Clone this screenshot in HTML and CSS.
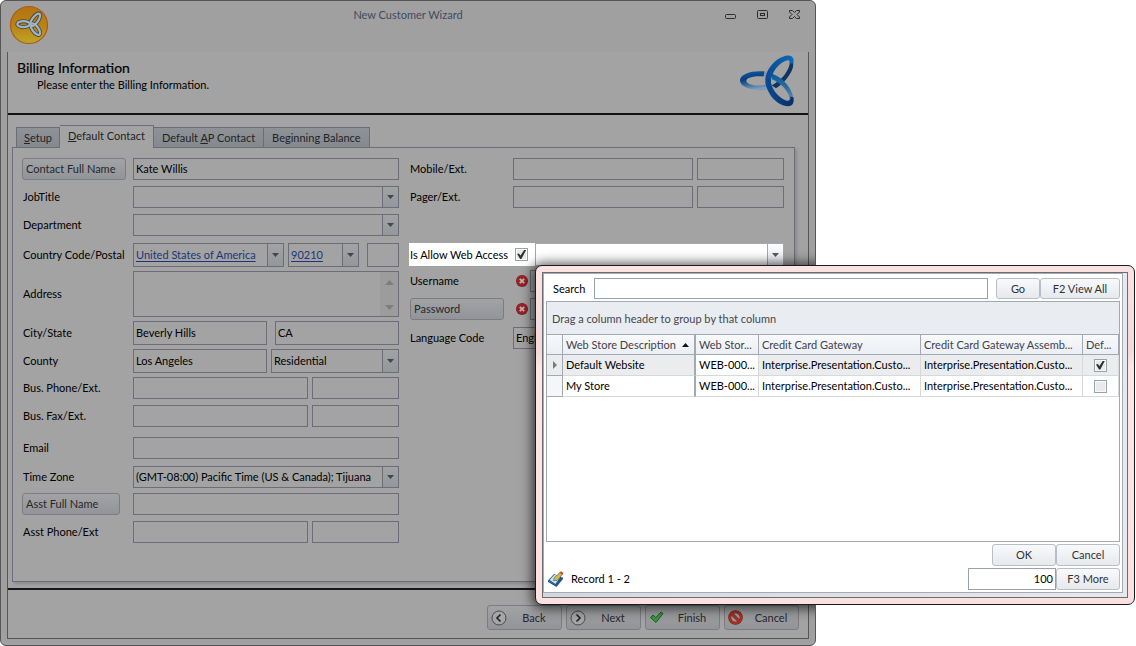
FILE: index.html
```html
<!DOCTYPE html>
<html lang="en">
<head>
<meta charset="utf-8">
<title>New Customer Wizard</title>
<link rel="stylesheet" href="styles.css">
</head>
<body>
<svg class="defs" width="0" height="0" aria-hidden="true">
  <defs>
    <linearGradient id="loopLeft" x1="0" y1="0" x2="0.25" y2="1"><stop offset="0" stop-color="#0c62a8"/><stop offset=".45" stop-color="#0a3a7c"/><stop offset=".75" stop-color="#3f6f9f"/><stop offset="1" stop-color="#7f9db8"/></linearGradient>
    <linearGradient id="loopTop" x1="1" y1="0" x2="0" y2="0"><stop offset="0" stop-color="#0d6cb4"/><stop offset="1" stop-color="#0a4a93"/></linearGradient>
    <linearGradient id="loopLow" x1="0" y1="0" x2="1" y2="0"><stop offset="0" stop-color="#0a4a93"/><stop offset="1" stop-color="#0b2f66"/></linearGradient>
    <linearGradient id="loopIn" x1="0" y1="0" x2="0" y2="1"><stop offset="0" stop-color="#0b5c9c"/><stop offset=".4" stop-color="#2b6a9c"/><stop offset="1" stop-color="#7c9cba"/></linearGradient>
    <linearGradient id="gold" x1="0" y1="0" x2="0" y2="1"><stop offset="0" stop-color="#b3740f"/><stop offset=".5" stop-color="#b98212"/><stop offset="1" stop-color="#bfa528"/></linearGradient>
    <symbol id="err" viewBox="0 0 12 12"><circle cx="6" cy="6" r="6" fill="#861a1e"/><circle cx="6" cy="5.700" r="5.200" fill="#992428"/><path d="M3.8 3.8l4.4 4.4M8.2 3.8L3.8 8.2" stroke="#c4b4b4" stroke-width="1.8"/></symbol>
    <symbol id="down" viewBox="0 0 7 4"><path d="M0 0h7L3.500 4z" fill="currentColor"/></symbol>
  </defs>
</svg>

<div class="desktop">
<main class="window">
  <header class="titlebar">
    <svg class="app-icon" viewBox="0 0 40 40" aria-hidden="true">
      <circle cx="20" cy="20" r="18.500" fill="url(#gold)" stroke="#ad5a1c" stroke-width="1.200"/>
      <g fill="none" stroke="#4c4a3c" stroke-width="4"><ellipse cx="14.500" cy="19.200" rx="6.200" ry="3"/><ellipse cx="26.200" cy="14.800" rx="7.400" ry="3" transform="rotate(-54 26.200 14.800)"/><ellipse cx="26.400" cy="24.200" rx="6.800" ry="3" transform="rotate(53 26.400 24.200)"/></g>
      <g fill="none" stroke="#9db4c8" stroke-width="2.200"><ellipse cx="14.500" cy="19.200" rx="6.200" ry="3"/><ellipse cx="26.200" cy="14.800" rx="7.400" ry="3" transform="rotate(-54 26.200 14.800)"/><ellipse cx="26.400" cy="24.200" rx="6.800" ry="3" transform="rotate(53 26.400 24.200)"/></g>
    </svg>
    <h1 class="window-title">New Customer Wizard</h1>
    <div class="window-controls">
      <button type="button" aria-label="Minimize"><svg width="11" height="10" viewBox="0 0 11 10"><rect x=".5" y="4.500" width="10" height="4" rx="1" fill="none" stroke="#2c2c30"/></svg></button>
      <button type="button" aria-label="Maximize"><svg width="11" height="10" viewBox="0 0 11 10"><rect x=".5" y=".5" width="10" height="8" rx="1" fill="none" stroke="#2c2c30"/><rect x="3.500" y="3.500" width="4" height="2" fill="none" stroke="#2c2c30"/></svg></button>
      <button type="button" aria-label="Close"><svg width="11" height="10" viewBox="0 0 11 10"><path d="M.5.500h3l2 2 2-2h3v1.500L8 4.500l2.500 2.500v1.500h-3l-2-2-2 2h-3V7L3 4.500.5 2z" fill="none" stroke="#2c2c30"/></svg></button>
    </div>
  </header>

  <div class="wizard">
    <section class="intro">
      <div>
        <h2>Billing Information</h2>
        <p>Please enter the Billing Information.</p>
      </div>
      <svg class="brand" viewBox="598 162 168 158" aria-hidden="true">
        <path fill="url(#loopLeft)" fill-rule="evenodd" d="M677 214C640 210 601 220 601 241c0 20 40 34 84 28l8-6-8-12C660 261 620 256 620 242c0-12 30-16 56-13z"/>
        <path fill="#0c3563" d="M752 180c10 2 10 14 7 24-8 24-28 46-50 60l-13-9c28-13 45-36 52-56 3-9 4-15 1-19z"/>
        <path fill="url(#loopIn)" d="M697 221c34 12 60 43 65 76 1 10-3 18-12 20l-9-14c11-1 9-13 4-23-10-20-29-35-48-43z"/>
        <path fill="url(#loopTop)" d="M761 190c4-17-4-25-17-24-32 3-66 40-67 73 0 10 2 17 5 24l13-8c-6-26 14-60 40-72 12-5 18-3 14 7z"/>
        <path fill="url(#loopLow)" d="M677 237c0 40 34 80 68 81 15 0 19-12 16-27l-9-2c2 14-6 15-15 11-24-10-42-36-46-63z"/>
        <path d="M676 212c-3 12-3 20 0 32" fill="none" stroke="#a3a3a3" stroke-width="3"/>
      </svg>
    </section>

    <section class="content">
      <nav class="tabs" role="tablist">
        <button type="button" role="tab" class="tab"><u>S</u>etup</button>
        <button type="button" role="tab" class="tab active" aria-selected="true"><u>D</u>efault Contact</button>
        <button type="button" role="tab" class="tab">Default <u>A</u>P Contact</button>
        <button type="button" role="tab" class="tab">Be<u>g</u>inning Balance</button>
      </nav>

      <form class="panel">
        <div class="column">
          <div class="row"><button type="button" class="btn wide">Contact Full Name</button><input class="field" aria-label="Contact Full Name" value="Kate Willis"></div>
          <div class="row"><label for="job">JobTitle</label><span class="combo"><input id="job"><button type="button" aria-label="Open"><svg class="caret"><use href="#down"/></svg></button></span></div>
          <div class="row"><label for="dept">Department</label><span class="combo"><input id="dept"><button type="button" aria-label="Open"><svg class="caret"><use href="#down"/></svg></button></span></div>
          <div class="row tall space-7"><span class="label">Country Code/Postal</span>
            <div class="postal"><span class="combo"><a href="#country">United States of America</a><button type="button" aria-label="Open"><svg class="caret"><use href="#down"/></svg></button></span><span class="combo"><a href="#postal">90210</a><button type="button" aria-label="Open"><svg class="caret"><use href="#down"/></svg></button></span><input class="field" aria-label="Plus 4"></div></div>
          <div class="row address space-4"><label for="addr">Address</label><div class="area"><textarea id="addr"></textarea><span class="scroll"><svg class="scroll-arrow up"><use href="#down"/></svg><svg class="scroll-arrow"><use href="#down"/></svg></span></div></div>
          <div class="row tall space-4"><label for="city">City/State</label><div class="city"><input class="field" id="city" value="Beverly Hills"><input class="field" aria-label="State" value="CA"></div></div>
          <div class="row tall space-4"><label for="county">County</label><div class="county"><input class="field" id="county" value="Los Angeles"><span class="combo"><select aria-label="Address type"><option>Residential</option></select><span class="arrow"><svg class="caret"><use href="#down"/></svg></span></span></div></div>
          <div class="row space-4"><label for="phone">Bus. Phone/Ext.</label><div class="phone"><input class="field" id="phone"><input class="field" aria-label="Phone extension"></div></div>
          <div class="row"><label for="fax">Bus. Fax/Ext.</label><div class="phone"><input class="field" id="fax"><input class="field" aria-label="Fax extension"></div></div>
          <div class="row space-10"><label for="email">Email</label><input class="field" id="email"></div>
          <div class="row space-7"><label for="tz">Time Zone</label><span class="combo"><select id="tz"><option>(GMT-08:00) Pacific Time (US &amp; Canada); Tijuana</option></select><span class="arrow"><svg class="caret"><use href="#down"/></svg></span></span></div>
          <div class="row space-5"><button type="button" class="btn asst">Asst Full Name</button><input class="field" aria-label="Asst Full Name"></div>
          <div class="row"><label for="asst">Asst Phone/Ext</label><div class="phone"><input class="field" id="asst"><input class="field" aria-label="Asst extension"></div></div>
        </div>

        <div class="column side">
          <div class="row"><label for="mobile">Mobile/Ext.</label><div class="mobile"><input class="field" id="mobile"><input class="field" aria-label="Mobile extension"></div></div>
          <div class="row"><label for="pager">Pager/Ext.</label><div class="mobile"><input class="field" id="pager"><input class="field" aria-label="Pager extension"></div></div>
          <div class="access"><span class="access-check"><label for="allow">Is Allow Web Access</label><input type="checkbox" id="allow" class="check" checked></span><span class="combo lit"><input aria-label="Web store"><button type="button" aria-label="Open"><svg class="caret"><use href="#down"/></svg></button></span></div>
          <div class="row space-4"><label for="user">Username</label><div class="required"><svg class="error"><use href="#err"/></svg><input class="field" id="user"></div></div>
          <div class="row"><button type="button" class="btn pass">Password</button><div class="required"><svg class="error"><use href="#err"/></svg><input class="field" type="password" aria-label="Password"></div></div>
          <div class="row space-7"><label for="lang">Language Code</label><span class="combo"><select id="lang"><option>English</option></select></span></div>
        </div>
      </form>
    </section>

    <footer class="actions">
      <button type="button" class="btn nav"><svg class="nav-icon" viewBox="0 0 16 16"><circle cx="8" cy="8" r="7" fill="#a6a6a6" stroke="#4c4c50"/><path d="M9.500 4.500L6 8l3.500 3.500" fill="none" stroke="#222" stroke-width="1.600"/></svg><span>Back</span></button>
      <button type="button" class="btn nav"><svg class="nav-icon" viewBox="0 0 16 16"><circle cx="8" cy="8" r="7" fill="#a6a6a6" stroke="#4c4c50"/><path d="M6.500 4.500L10 8l-3.500 3.500" fill="none" stroke="#222" stroke-width="1.600"/></svg><span>Next</span></button>
      <button type="button" class="btn nav"><svg class="nav-icon" viewBox="0 0 16 16"><path d="M1.500 7.500l2.700-2.500 2.600 2.700L12 2l2 1.500-7 9z" fill="#3c9a35" stroke="#1d5a22"/></svg><span>Finish</span></button>
      <button type="button" class="btn nav"><svg class="nav-icon" viewBox="0 0 16 16"><circle cx="7.500" cy="7.500" r="5.800" fill="none" stroke="#7e2017" stroke-width="3"/><path d="M3.500 3.500l8 8" stroke="#7e2017" stroke-width="3"/><circle cx="7.500" cy="7.500" r="5.800" fill="none" stroke="#a93425" stroke-width="1.800"/><path d="M3.500 3.500l8 8" stroke="#a93425" stroke-width="1.800"/></svg><span>Cancel</span></button>
    </footer>
  </div>
  <div class="popup-shade"></div>
</main>

<section class="popup" role="dialog" aria-label="Web store lookup">
  <div class="popup-frame">
    <div class="popup-body">
      <div class="search"><label for="search">Search</label><input class="field" id="search"><div class="pair"><button type="button" class="btn light go">Go</button><button type="button" class="btn light view">F2 View All</button></div></div>
      <div class="grid">
        <div class="group-bar">Drag a column header to group by that column</div>
        <table>
          <colgroup><col class="c-mark"><col class="c-desc"><col class="c-code"><col class="c-gate"><col class="c-gate"><col class="c-def"></colgroup>
          <thead><tr><th></th><th class="fixed">Web Store Description <svg class="sort" viewBox="0 0 7 4"><path d="M0 4h7L3.500 0z"/></svg></th><th>Web Stor...</th><th>Credit Card Gateway</th><th>Credit Card Gateway Assemb...</th><th>Def...</th></tr></thead>
          <tbody>
            <tr class="current"><td class="mark"><svg class="pointer" viewBox="0 0 4 8"><path d="M0 0l4 4-4 4z"/></svg></td><td class="fixed">Default Website</td><td class="focus">WEB-000...</td><td>Interprise.Presentation.Custo...</td><td>Interprise.Presentation.Custo...</td><td class="center"><input type="checkbox" class="check" aria-label="Default Website is default" checked></td></tr>
            <tr><td class="mark"></td><td class="fixed">My Store</td><td>WEB-000...</td><td>Interprise.Presentation.Custo...</td><td>Interprise.Presentation.Custo...</td><td class="center"><input type="checkbox" class="check" aria-label="My Store is default"></td></tr>
          </tbody>
        </table>
      </div>
      <div class="popup-foot">
        <div class="record"><svg class="note" viewBox="0 0 16 16"><path d="M0 9.500L6 3l9 4-6.500 8z" fill="#1d4f7c"/><path d="M1.500 9L6.500 3.500 12 6.500 7.500 13z" fill="#c8e0f0"/><path d="M0 9.500l8 4.500 7-8v2L8.500 16 0 11z" fill="#275b88"/><path d="M5.500 9.500l1-3L12 1.500l2.500 2-5.500 6z" fill="#e4b52e" stroke="#3f78a8" stroke-width=".8"/><path d="M11.500 1.500l1.500-1.200 2.500 1.700-1.300 1.700z" fill="#cf4a32"/></svg><span>Record 1 - 2</span></div>
        <div class="foot-controls">
          <div class="pair"><button type="button" class="btn light">OK</button><button type="button" class="btn light">Cancel</button></div>
          <div class="pair"><input class="field count" aria-label="Records per page" value="100"><button type="button" class="btn light">F3 More</button></div>
        </div>
      </div>
    </div>
  </div>
</section>
</div>
</body>
</html>
```
FILE: styles.css
```css
* { box-sizing: border-box; }
body { margin: 0; background: #fff; font: 11px/16px Lato, sans-serif; color: #000; }
button, input, select, textarea { font: inherit; color: inherit; margin: 0; border-radius: 0; }
h1, h2, p { margin: 0; font-weight: 400; }
.defs { position: absolute; }
.desktop { position: relative; min-width: 1000px; }

/* Wizard window */
.window { position: relative; overflow: hidden; width: calc(100% - 320px); padding: 0 6px 6px; border: 1px solid #55565a; border-radius: 6px; background: #a0a0a0; }
.titlebar { display: grid; grid-template-columns: 1fr auto 1fr; align-items: start; height: 51px; }
.app-icon { width: 40px; height: 40px; margin: 4px 0 0 2px; }
.window-title { padding-top: 6px; font-size: 11px; color: #3f4b5e; }
.window-controls { display: flex; justify-content: flex-end; gap: 21px; padding: 9px 9px 0 0; }
.window-controls button { display: block; padding: 0; border: 0; background: none; line-height: 0; }
.wizard { border: 1px solid #55565a; border-top: 0; background: #a3a3a3; }
.intro { display: flex; justify-content: space-between; align-items: flex-start; height: 63px; padding: 2px 13px 0 9px; border-bottom: 2px solid #131313; }
.intro h2 { padding-top: 5px; font-size: 14px; line-height: 18px; -webkit-text-stroke: 0.2px #000; }
.intro p { padding-left: 20px; }
.brand { width: 56px; height: 53px; }

/* Tabs */
.content { padding: 10px 13px 6px 4px; }
.tabs { display: flex; align-items: flex-end; padding-left: 4px; }
.tab { height: 20px; padding: 0 8px; border: 1px solid #6c6d78; border-width: 1px 1px 0 0; background: linear-gradient(#8f9297, #85898e); color: #222428; line-height: 18px; }
.tab:first-child { padding: 0 7px; border-left-width: 1px; }
.tab.active { height: 23px; margin-bottom: -1px; padding: 0 8px 2px; background: #a3a3a3; z-index: 1; }
.panel { display: grid; grid-template-columns: minmax(0, 377px) minmax(0, 375px); column-gap: 11px; padding: 10px 9px 38px; border: 1px solid #6c6d78; box-shadow: 2px 2px 3px #8a8a8a; }

/* Form rows */
.row { display: grid; grid-template-columns: 111px minmax(0, 1fr); align-items: center; min-height: 22px; margin-top: 6px; }
.row:first-child { margin-top: 0; }
.side .row { grid-template-columns: 103px minmax(0, 1fr); padding-right: 1px; }
.row.tall { min-height: 24px; }
.row > * { align-self: stretch; }
.row > label, .row > .label { align-self: center; white-space: nowrap; }
.column:not(.side) .row > label, .row > .label { padding-left: 1px; }
.row.space-4 { margin-top: 4px; }
.row.space-5 { margin-top: 5px; }
.row.space-7 { margin-top: 7px; }
.row.space-10 { margin-top: 10px; }
.field, .combo, .area { min-width: 0; width: 100%; border: 1px solid #6c6d78; background: transparent; }
.field { padding: 0 2px; outline-offset: -1px; }
.combo { display: flex; }
.combo input, .combo select { flex: 1; min-width: 0; width: 0; padding: 0 2px; border: 0; background: transparent; appearance: none; }
.combo a { flex: 1; min-width: 0; align-self: center; padding-left: 2px; color: #1d3578; text-underline-offset: 2px; white-space: nowrap; }
.combo button, .arrow { flex: none; display: flex; align-items: center; justify-content: center; width: 16px; padding: 0; border: 0; border-left: 1px solid #6c6d78; background: linear-gradient(#a1a3a5, #94979b); color: #44464b; }
.caret { width: 7px; height: 4px; }
.postal { display: grid; grid-template-columns: minmax(0, 151fr) minmax(0, 71fr) minmax(0, 36fr); gap: 4px; }
.postal .field { width: auto; margin-left: 4px; }
.city { display: grid; grid-template-columns: 134fr 124fr; gap: 8px; }
.county { display: grid; grid-template-columns: 134fr 128fr; gap: 4px; }
.phone { display: grid; grid-template-columns: 175fr 87fr; gap: 4px; }
.mobile { display: grid; grid-template-columns: 180fr 87fr; gap: 4px; }
.address { min-height: 46px; }
.area { display: flex; }
.area textarea { flex: 1; min-width: 0; height: 44px; padding: 2px; border: 0; background: transparent; resize: none; }
.scroll { display: flex; flex-direction: column; justify-content: space-between; align-items: center; width: 18px; padding: 8px 0 6px; background: #9c9c9c; color: #7c7d80; }
.scroll-arrow { width: 9px; height: 5px; }
.scroll-arrow.up { transform: rotate(180deg); }
.btn { padding: 0 3px; border: 1px solid #7b7d83; border-radius: 3px; background: linear-gradient(#a2a3a5, #929499); color: #26282c; text-align: left; white-space: nowrap; }
.wide { margin-right: 7px; }
.asst { margin-right: 13px; }
.pass { margin-right: 9px; }
.access { display: flex; height: 23px; margin: 35px 0 0 -1px; padding-right: 1px; }
.access-check { display: flex; align-items: center; gap: 7px; flex: none; width: 126px; padding-left: 1px; background: #fff; white-space: nowrap; }
.lit { flex: 1; border-color: #a2a7b3; background: #fff; }
.lit button { border-color: #a2a7b3; background: linear-gradient(#fbfcfd, #e8ebef); color: #55585e; }
.required { display: flex; align-items: center; gap: 2px; padding-left: 3px; }
.required .field { align-self: stretch; flex: 1; }
.error { flex: none; width: 12px; height: 12px; }
.check { appearance: none; flex: none; display: inline-grid; place-items: center; width: 13px; height: 13px; border: 1px solid #9aa0ac; background: #e9eaec; box-shadow: inset 0 0 0 1px #fafafa; }
.check:checked::after { content: ""; width: 9px; height: 9px; background: #2f3134; clip-path: polygon(0 45%, 20% 38%, 38% 62%, 78% 0, 100% 0, 48% 100%, 34% 100%); }

/* Wizard buttons */
.actions { display: flex; justify-content: flex-end; gap: 4px; padding: 15px 9px 8px; border-top: 2px solid #161616; }
.nav { display: flex; align-items: center; width: 75px; height: 25px; }
.nav-icon { flex: none; width: 16px; height: 16px; }
.nav span { flex: 1; padding-left: 3px; text-align: center; }
.popup-shade { position: absolute; left: 534px; top: 264px; width: 600px; height: 340px; border-radius: 8px; box-shadow: 0 1px 12px 3px rgba(0, 0, 0, .65); }

/* Lookup popup */
.popup { position: absolute; left: 535px; right: 1px; top: 265px; padding: 6px; border: 1px solid #1c1c1f; border-radius: 7px; background: linear-gradient(#fbe3e3, #f3d9d9 25%, #fde6e6 30%, #fbe0e0); }
.popup-frame { padding: 1px 5px 5px 1px; border: 1px solid #6e6c72; background: linear-gradient(to right, #d3d8df, #e6eaef); }
.popup-body { padding: 4px 2px 2px; background: #fff; box-shadow: 0 0 0 1px #a5abb6; }
.popup .field { border-color: #9aa1ae; background: #fff; }
.search { display: flex; align-items: stretch; height: 21px; margin-bottom: 2px; }
.search label { flex: none; width: 48px; padding-left: 7px; line-height: 21px; }
.search .field { flex: 1; margin-right: 8px; }
.pair { display: flex; }
.light { width: 64px; height: 22px; border-color: #b8bdc6; background: linear-gradient(#f8f9fb, #e6e9ed); color: #303236; text-align: center; }
.search .light { height: 21px; }
.light.go { width: 44px; }
.light.view { width: 80px; }
.grid { min-height: 241px; border: 1px solid #a2a9b5; }
.group-bar { height: 33px; padding: 9px 5px 0; border-bottom: 1px solid #a2a9b5; background: #e9ecf1; color: #44474d; }
table { width: 100%; border-collapse: separate; border-spacing: 0; table-layout: fixed; }
.c-mark { width: 16px; }
.c-desc { width: 133px; }
.c-code { width: 63px; }
.c-def { width: 36px; }
th, td { height: 21px; padding: 0 3px; border-right: 1px solid #d5d8dd; border-bottom: 1px solid #d5d8dd; font-weight: 400; line-height: 20px; text-align: left; white-space: nowrap; }
th { height: 20px; line-height: 19px; border-color: #a2a9b5; background: linear-gradient(#f8f9fb, #ebeef3); color: #3f4249; }
.mark { padding: 0; border-color: #a2a9b5; background: #f5f6f8; text-align: center; line-height: 0; }
.fixed { border-right: 2px solid #a2a9b5; }
.current td { background: #ebeced; }
.current .focus { background: #fff; }
.center { padding: 0; text-align: center; line-height: 0; }
.center .check { vertical-align: middle; }
.sort { width: 7px; height: 4px; margin-left: 3px; vertical-align: 2px; fill: #111; }
.pointer { width: 4px; height: 8px; fill: #777b82; }
.popup-foot { display: flex; justify-content: space-between; align-items: flex-end; padding-top: 2px; }
.record { display: flex; align-items: center; gap: 7px; padding: 0 0 3px 2px; }
.note { width: 16px; height: 16px; }
.foot-controls { display: flex; flex-direction: column; align-items: flex-end; gap: 2px; }
.popup .count { width: 88px; text-align: right; }
```
